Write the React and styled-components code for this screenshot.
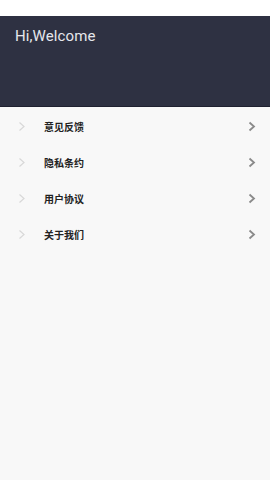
import React from "react";
import styled, { createGlobalStyle } from "styled-components";

const Global = createGlobalStyle`
  html, body {
    margin: 0;
    padding: 0;
    background: #f8f8f8;
    font-family: Roboto, "Noto Sans CJK SC", sans-serif;
  }
`;

const Page = styled.div`
  width: 270px;
  min-height: 480px;
  background: #f8f8f8;
  display: flex;
  flex-direction: column;
`;

const StatusBar = styled.div`
  height: 16px;
  background: #ffffff;
`;

const Header = styled.div`
  height: 91px;
  background: #2e3142;
  padding: 12px 15px 0;
  box-sizing: border-box;
  border-bottom: 1px solid #1f2130;
`;

const Greeting = styled.div`
  color: #e6e7ec;
  font-size: 15px;
  line-height: 17px;
  letter-spacing: 0.1px;
`;

const List = styled.div`
  display: flex;
  flex-direction: column;
  padding-top: 1px;
`;

const Row = styled.div`
  height: 36px;
  display: flex;
  align-items: center;
  padding: 0 14px 0 18px;
`;

const Label = styled.span`
  flex: 1;
  margin-left: 18px;
  font-size: 10px;
  font-weight: 700;
  color: #222;
  font-family: "Noto Sans CJK SC", sans-serif;
`;

const Chevron = ({ color, width }) => (
  <svg width="8" height="11" viewBox="0 0 8 11">
    <path d="M1.5 1.5 L6 5.5 L1.5 9.5" fill="none" stroke={color} strokeWidth={width} />
  </svg>
);

const items = ["意见反馈", "隐私条约", "用户协议", "关于我们"];

export default function App() {
  return (
    <Page>
      <Global />
      <StatusBar />
      <Header>
        <Greeting>Hi,Welcome</Greeting>
      </Header>
      <List>
        {items.map((t) => (
          <Row key={t}>
            <Chevron color="#d8d8d8" width={1.2} />
            <Label>{t}</Label>
            <Chevron color="#8a8a8a" width={1.8} />
          </Row>
        ))}
      </List>
    </Page>
  );
}
